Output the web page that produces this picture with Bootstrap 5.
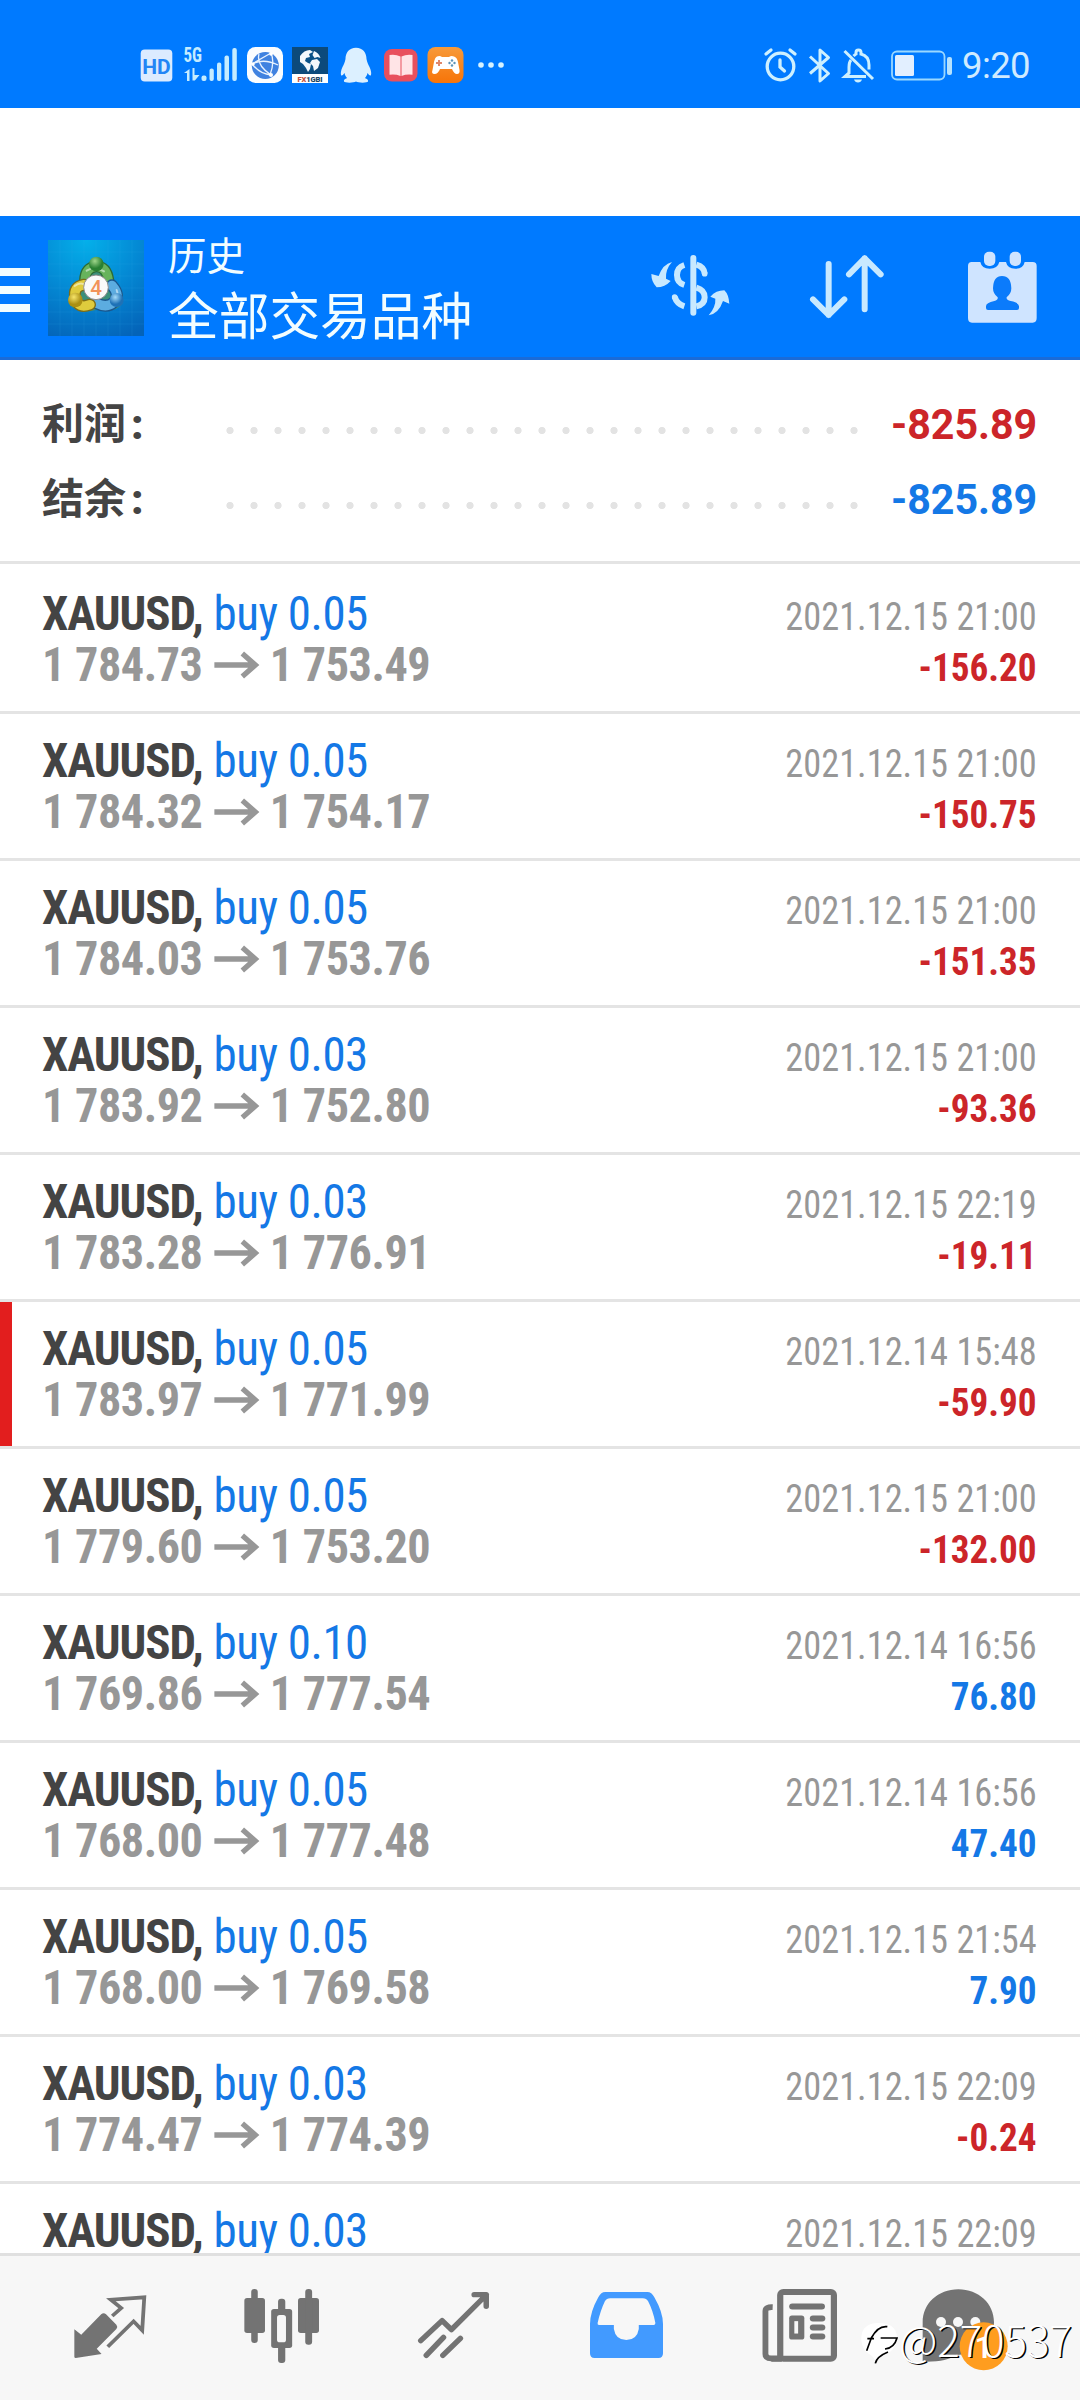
<!DOCTYPE html>
<html lang="zh-CN">
<head>
<meta charset="utf-8">
<meta name="viewport" content="width=device-width, initial-scale=1">
<title>历史</title>
<link rel="stylesheet" href="https://cdn.jsdelivr.net/npm/bootstrap@5.3.0/dist/css/bootstrap.min.css">
<style>
  body { width: 1080px; height: 2400px; overflow: hidden; background: #fff; font-family: Roboto, "Noto Sans CJK SC", sans-serif; color: #444; }
  svg { display: block; flex: none; overflow: visible; }
  .screen { height: 2400px; }
  .status-bar { height: 108px; background: #007aff; padding: 47px 50px 0 140px; }
  .clock { font-size: 36.5px; line-height: 37px; color: #cfeaff; letter-spacing: -.6px; margin-left: 9px; }
  .app-bar { margin-top: 108px; height: 144px; background: #007aff; border-bottom: 3px solid #1a6bd8; color: #f2fdff; }
  .burger { width: 30px; margin-top: 52px; }
  .burger i { display: block; height: 8px; background: #f2fdff; margin-bottom: 10px; }
  .title-sub { font-size: 38.5px; line-height: 50px; }
  .title-main { font-size: 50.7px; line-height: 70px; }
  .titles { margin-left: 24px; padding-top: 12px; font-family: "Noto Sans CJK SC", sans-serif; font-weight: 400; }
  .summary { height: 201px; padding: 26px 43px 0 42px; }
  .summary-line { height: 75px; font-size: 42px; line-height: 75px; font-weight: 700; }
  .summary-label { width: 176px; font-family: "Noto Sans CJK SC", sans-serif; line-height: 70px; }
  .summary-label b { font-family: Roboto, sans-serif; margin-left: 5px; }
  .summary-value { transform: scaleX(.98); transform-origin: right; padding-top: 1px; }
  .leader { width: 648px; height: 75px; background: radial-gradient(circle, #e3e3e3 3.2px, transparent 4px) 0 7px / 24px 75px; }
  .deals { height: 1692px; overflow: hidden; border-top: 3px solid #e4e4e4; padding-top: 3px; }
  .deal { height: 147px; border-bottom: 3px solid #e4e4e4; padding: 21px 43px 0 42px; line-height: 51px; font-family: "Roboto Condensed", Roboto, sans-serif; font-stretch: 75%; font-size: 48px; white-space: nowrap; }
  .deal.flagged { box-shadow: inset 12px 0 #e21e1e; }
  .order { transform: scaleX(.979); transform-origin: left; }
  .sym { font-weight: 700; letter-spacing: -1.1px; }
  .side { color: #1478e6; letter-spacing: -.5px; }
  .price { font-weight: 700; color: #979797; letter-spacing: -.5px; transform: scaleX(.963); transform-origin: left; }
  .deal-end { padding-top: 4px; font-size: 39px; }
  .when { color: #979797; transform: scaleX(.932); transform-origin: right; }
  .profit { font-weight: 700; transform: scaleX(.953); transform-origin: right; }
  .loss { color: #cc2529; }
  .gain { color: #1478e6; }
  .tabs { height: 147px; background: #f7f7f7; border-top: 3px solid #e0e0e0; position: relative; padding-top: 3px; }
  .watermark { right: 8px; top: 53px; color: #fff; }
  .watermark span { font: 300 42px/60px "Noto Sans CJK SC", sans-serif; text-shadow: 1.5px 1.2px 0 #000; }
</style>
</head>
<body>
<div class="screen d-flex flex-column">

  <header class="status-bar d-flex align-items-start">
    <svg width="33" height="36" viewBox="0 0 33 36"><rect x=".7" y="2.5" width="31.6" height="32" rx="4" fill="#dcebff"/><text x="16.4" y="26.500" text-anchor="middle" font-family="Roboto" font-weight="700" font-size="21" fill="#2385f5">HD</text></svg>
    <svg width="54" height="36" viewBox="0 0 54 36" style="margin-left:11px" fill="#c5ecff"><text x="-.5" y="14.500" font-family="Roboto Condensed" font-stretch="75%" font-weight="700" font-size="19.500" textLength="18.500" lengthAdjust="spacingAndGlyphs">5G</text><path d="M0 26l5.500-4v12H3v-8zM8.500 21l2 .0v7l5 0-4.600 5.500H8.500z"/><rect x="17.500" y="28.500" width="5" height="5.500" rx="2"/><rect x="25.500" y="21.500" width="4.300" height="12.500" rx="2"/><rect x="33" y="15.500" width="4.300" height="18.500" rx="2"/><rect x="40.500" y="8.500" width="4.500" height="25.500" rx="2"/><rect x="48.300" y="1" width="4.500" height="33" rx="2"/></svg>
    <svg width="36" height="36" viewBox="0 0 36 36" style="margin-left:9px"><rect width="36" height="36" rx="8.500" fill="#fafdff"/><circle cx="18.300" cy="18.500" r="13.500" fill="#3f82e0"/><path d="M5 17l19-11M5 17q8 10 19 11M24 6q4 9-1 22M12 7q-3 11 12 21M5 17q12-6 26 1" fill="none" stroke="#e8f3ff" stroke-width="1.300"/><g fill="#fff"><circle cx="6" cy="17" r="1.800"/><circle cx="24" cy="7" r="1.800"/><circle cx="24" cy="28" r="2"/></g></svg>
    <svg width="36" height="36" viewBox="0 0 36 36" style="margin-left:9px"><rect width="36" height="36" fill="#fff"/><rect width="36" height="27" fill="#0c4a7b"/><circle cx="18" cy="13.500" r="10.500" fill="#0a5288"/><path d="M8 9q4-6 10-6l3 2-4 2 1 3-4 1-1 3 3 2 3 1-1 5-2 3-2-4-3-4-3-2zM22 4q5 2 6.500 7l-3-1-3 1-2-3zM20 13l5-1 3 3-2 6-4 3-1-5-3-3z" fill="#f2f8fc"/><text x="18" y="34.500" text-anchor="middle" font-family="Roboto" font-weight="900" font-size="7.500" textLength="25" fill="#1b4563"><tspan fill="#c5533c">FX</tspan>1GBI</text></svg>
    <svg width="32" height="36" viewBox="0 0 32 36" style="margin-left:12px"><path d="M16 .8C9 .8 5.500 6 5.500 12c-.5 3-1.500 5-3 8-1.500 3-2 6-1.500 8 .8 1.500 2.500-.5 3.500-2 .5 2.500 1.500 4 2.700 5-2.500.7-3.700 2-3.200 3.500C4.500 36 14 36 16 34.500 18 36 27.500 36 28 34.500c.5-1.500-.7-2.800-3.200-3.500 1.200-1 2.200-2.500 2.700-5 1 1.500 2.700 3.500 3.500 2 .5-2 0-5-1.500-8-1.500-3-2.500-5-3-8C26.500 6 23 .8 16 .8z" fill="#dcf0ff"/></svg>
    <svg width="34" height="36" viewBox="0 0 34 36" style="margin-left:12px"><rect y="2" width="33.500" height="32.500" rx="8" fill="#e8505d"/><path d="M5.500 8q6-1 11 1.500V29q-5-2-11-1.200zM28.500 8q-6-1-11 1.500V29q5-2 11-1.200z" fill="#ffe4e6"/></svg>
    <svg width="37" height="36" viewBox="0 0 37 36" style="margin-left:9px"><defs><linearGradient id="og" x2="0" y2="1"><stop stop-color="#f79a3a"/><stop offset="1" stop-color="#f77408"/></linearGradient></defs><rect x=".5" width="36" height="36" rx="8" fill="url(#og)"/><path d="M10 9.500q3-1 5 .5h7q2-1.500 5-.5 3 .8 4 5.500l1.500 8q.5 4-2.500 4t-5-5H13q-2 5-5.500 5T5.500 23L7 15q1-4.700 3-5.500z" fill="#fff"/><path d="M9 16h6M12 13v6" stroke="#e0876a" stroke-width="2"/><g fill="#5c93b8"><circle cx="25" cy="13.500" r="1.200"/><circle cx="25" cy="18.500" r="1.200"/><circle cx="22.500" cy="16" r="1.200"/><circle cx="27.500" cy="16" r="1.200"/></g></svg>
    <svg width="26" height="36" viewBox="0 0 26 36" style="margin-left:14px" fill="#d6f2ff"><circle cx="3" cy="18" r="2.800"/><circle cx="13" cy="18" r="2.800"/><circle cx="23" cy="18" r="2.800"/></svg>

    <div class="d-flex ms-auto">
      <svg width="33" height="36" viewBox="0 0 33 36" fill="none" stroke="#cdf0ff" stroke-width="3.300" stroke-linecap="round"><circle cx="16.500" cy="19.500" r="13.300"/><path d="M16 13v7l4.500 4M2 7l5-4M31 7l-5-4"/></svg>
      <svg width="22" height="36" viewBox="0 0 22 36" style="margin-left:12px" fill="none" stroke="#cdf0ff" stroke-width="3" stroke-linejoin="round"><path d="M1 9.500l18.500 17L11 34V3l8.500 7.500L1 26.500"/></svg>
      <svg width="31" height="36" viewBox="0 0 31 36" style="margin-left:12px" fill="none" stroke="#cdf0ff" stroke-width="3"><path d="M1.500 4L30 32M8 13q-2 2-2 7v6l-4 3.500h21M10.500 9q1.500-1.500 2.500-2V5.500a2.500 2.500 0 0 1 5 0V7q8 2 8 11v4.500"/><path d="M11 32.500h8q-1 3-4 3t-4-3z" fill="#cdf0ff" stroke="none"/></svg>
      <svg width="62" height="36" viewBox="0 0 62 36" style="margin-left:17px"><rect x="1" y="4.500" width="52.500" height="28" rx="5" fill="none" stroke="#9ad8ff" stroke-width="1.800"/><rect x="4" y="8" width="19" height="21" rx="1.500" fill="#e2efff"/><rect x="56" y="10" width="5" height="18" rx="2" fill="#b5e2ff"/></svg>
      <div class="clock">9:20</div>
    </div>
  </header>

  <nav class="app-bar d-flex align-items-start">
    <div class="burger"><i></i><i></i><i></i></div>
    <svg width="96" height="96" viewBox="144 90 288 288" style="margin:24px 0 0 18px">
      <defs>
        <radialGradient id="bg" cx=".4" cy="0" r="1.100"><stop stop-color="#04b0ea"/><stop offset=".5" stop-color="#0489d4"/><stop offset="1" stop-color="#0463b8"/></radialGradient>
        <radialGradient id="gn" cx=".4" cy=".3"><stop stop-color="#9fd68a"/><stop offset="1" stop-color="#2a8032"/></radialGradient>
        <radialGradient id="yl" cx=".4" cy=".3"><stop stop-color="#f7e56a"/><stop offset="1" stop-color="#ab8f14"/></radialGradient>
        <radialGradient id="bl" cx=".4" cy=".3"><stop stop-color="#a6dcfa"/><stop offset="1" stop-color="#1e71b6"/></radialGradient>
      </defs>
      <rect x="144" y="90" width="288" height="288" fill="url(#bg)"/>
      <path d="M180 90v288M216 90v288M252 90v288M288 90v288M324 90v288M360 90v288M396 90v288M144 126h288M144 162h288M144 198h288M144 234h288M144 270h288M144 306h288M144 342h288" stroke="#46b4ea" stroke-opacity=".2" stroke-width="2"/>
      <path d="M238 214Q240 160 288 154Q338 160 342 214Q376 240 366 282Q344 310 296 298Q240 316 210 286Q198 226 238 214z" fill="#3c8f7a"/>
      <g fill="none" stroke-linecap="round">
        <path d="M254 212Q256 172 288 170T326 212" stroke="#2c6b35" stroke-width="34"/><path d="M254 212Q256 172 288 170T326 212" stroke="#67b35c" stroke-width="26"/>
        <path d="M336 226Q362 256 342 276T290 280" stroke="#1b568c" stroke-width="36"/><path d="M336 226Q362 256 342 276T290 280" stroke="#5cace0" stroke-width="28"/>
        <path d="M252 224Q218 230 226 264T270 284" stroke="#7d6c17" stroke-width="36"/><path d="M252 224Q218 230 226 264T270 284" stroke="#dfcb3d" stroke-width="28"/>
        <path d="M260 182q24-16 52 2M224 228q14-10 26-6M350 240q8 20-8 36" stroke="#fff" stroke-opacity=".5" stroke-width="6"/>
      </g>
      <circle cx="289" cy="162" r="22" fill="url(#gn)"/><circle cx="226" cy="270" r="22" fill="url(#yl)"/><circle cx="350" cy="270" r="21" fill="url(#bl)"/>
      <circle cx="288" cy="232" r="37" fill="#fafafa" stroke="#8c8c8c" stroke-width="3"/>
      <text x="288" y="254" text-anchor="middle" font-family="Roboto" font-weight="500" font-size="62" fill="#f2935a">4</text>
    </svg>
    <div class="titles"><div class="title-sub">历史</div><div class="title-main">全部交易品种</div></div>
    <div class="d-flex ms-auto" style="margin-right:43px">
      <svg width="79" height="62" viewBox="92 137 237 186" style="margin:39px 80px 0 0" fill="none" stroke="#c8e9ff" stroke-width="18">
        <path d="M219 146v164" stroke-linecap="round"/>
        <path d="M192 167Q170 174 170 197T192 227M163 263Q170 284 192 291"/><circle cx="163" cy="263" r="8.500" fill="#c8e9ff" stroke="none"/>
        <path d="M228 166Q252 173 253 193M228 235Q253 242 253 264T228 291"/><circle cx="253" cy="193" r="8.500" fill="#c8e9ff" stroke="none"/>
        <path d="M155 158Q128 164 115 200L93 194Q93 218 109 234Q134 234 151 215L137 208Q135 180 155 158zM265 318Q295 313 308 275L327 283Q325 255 312 243Q287 243 270 262L285 268Q287 292 265 318z" fill="#c8e9ff" stroke="none"/>
      </svg>
      <svg width="74" height="64" viewBox="568 137 222 192" style="margin:39px 84px 0 0" fill="none" stroke="#c8e9ff" stroke-width="18" stroke-linecap="round" stroke-linejoin="round"><path d="M624 164v153M577 270l47 47 47-47M732 300V147M685 195l47-48 48 48"/></svg>
      <svg width="69" height="72" viewBox="1043 123 207 216" style="margin-top:35px"><path d="M1054 156h26q4 20 28 20t29-20h20q4 20 28 20t28-20h24q12 0 12 12v156q0 14-12 14h-182q-12 0-12-14V168q0-12 11-12z" fill="#cfe4ff"/><rect x="1091" y="125" width="34" height="43" rx="15" fill="#cfe4ff"/><rect x="1168" y="125" width="34" height="43" rx="15" fill="#cfe4ff"/><path d="M1145 198q27 0 28 37 0 16-14 27-2 8 12 11 25 5 25 16v5q0 6-6 6h-87q-6 0-6-6v-5q0-11 25-16 12-3 10-11-14-11-14-27 1-37 27-37z" fill="#0b7bfb"/></svg>
    </div>
  </nav>

  <section class="summary">
    <div class="summary-line d-flex justify-content-between"><div class="d-flex"><span class="summary-label">利润<b>:</b></span><div class="leader"></div></div><span class="summary-value loss">-825.89</span></div>
    <div class="summary-line d-flex justify-content-between"><div class="d-flex"><span class="summary-label">结余<b>:</b></span><div class="leader"></div></div><span class="summary-value gain">-825.89</span></div>
  </section>

  <ul class="deals list-unstyled mb-0" id="deals"></ul>

  <footer class="tabs d-flex align-items-start">
    <svg preserveAspectRatio="none" width="72" height="63" viewBox="215 284 209 189" style="margin:36px 0 0 74px"><path d="M216 387l20 16 58-61q7-6 14 0l30 31q5 6 0 13l-57 59 14 16-75 12q-4 0-4-4z" fill="#737373"/><path d="M326 347l26-24-30-25 97-7-6 99-25-27-75 76" fill="none" stroke="#737373" stroke-width="11"/></svg>
    <svg preserveAspectRatio="none" width="75" height="74" viewBox="708 267 218 222" style="margin:30px 0 0 98px" fill="#737373"><rect x="709" y="294" width="60" height="105" rx="8"/><rect x="729" y="267" width="19" height="162" rx="9"/><rect x="865" y="294" width="61" height="105" rx="8"/><rect x="886" y="267" width="20" height="167" rx="9"/><rect x="807" y="296" width="21" height="50" rx="9"/><rect x="807" y="430" width="21" height="59" rx="9"/><rect x="787" y="327" width="61" height="117" rx="8"/><rect x="804" y="345" width="26" height="82" rx="8" fill="#f7f7f7"/></svg>
    <svg preserveAspectRatio="none" width="71" height="66" viewBox="1214 276 206 198" style="margin:33px 0 0 99px" fill="none" stroke="#737373" stroke-width="16" stroke-linecap="round"><path d="M1222 422l62-60 27 27 101-104M1377 284h35v35M1238 466l50-54M1286 466l51-51" stroke-linejoin="round"/></svg>
    <svg preserveAspectRatio="none" width="73" height="66" viewBox="146 276 211 198" style="margin:33px 0 0 101px"><path d="M190 276h122q12 0 20 16 25 45 25 80v88q0 14-13 14H159q-13 0-13-14v-88q0-35 24-80 8-16 20-16z" fill="#429aff"/><path d="M204 295h95q10 0 15 9 14 28 21 65 0 6-5 6h-43v12q-5 33-36 33t-36-33v-12h-43q-5 0-4-6 8-37 21-65 5-9 15-9z" fill="#f7f7f7"/></svg>
    <svg preserveAspectRatio="none" width="75" height="73" viewBox="646 266 218 218" style="margin:30px 0 0 99px"><path d="M677 320q-21-1-21 12v128q0 13 16 13h30" fill="none" stroke="#737373" stroke-width="17"/><rect x="699" y="275" width="156" height="199" rx="9" fill="none" stroke="#737373" stroke-width="18"/><g fill="#737373"><path d="M680 474V466h20l4 17h-32z"/><rect x="725" y="309" width="104" height="18" rx="9"/><rect x="725" y="345" width="44" height="72" rx="8"/><rect x="785" y="345" width="45" height="18" rx="9"/><rect x="785" y="372" width="45" height="18" rx="9"/><rect x="785" y="399" width="45" height="18" rx="9"/></g><rect x="740" y="362" width="11" height="37" fill="#f7f7f7"/></svg>
    <svg width="86" height="82" viewBox="245 56 258 246" style="margin:30px 0 0 85px"><path d="M354 57C415 57 461 100 461 156S415 254 345 254Q320 276 247 274V156C247 100 293 57 354 57z" fill="#737373"/><g fill="#f7f7f7"><circle cx="302" cy="155" r="15"/><circle cx="353" cy="155" r="15"/><circle cx="405" cy="155" r="15"/></g><circle cx="430" cy="228" r="72" fill="#ff9d1f"/><text x="430" y="264" text-anchor="middle" font-family="Roboto" font-weight="500" font-size="96" fill="#fff">1</text></svg>
    <div class="watermark position-absolute d-flex align-items-center">
      <svg width="38" height="40" viewBox="48 160 112 120" style="margin-top:8px"><path d="M48 200q4-36 45-40 62-2 62 45-3 40-45 55-14 6-17 20-8-18-14-22-34-18-31-58z" fill="#fff"/><path d="M64 243l14-38q20-38 48-34M66 207h20M106 205h49q-8 30-36 33M90 281q4-20 38-34" fill="none" stroke="#000" stroke-width="5"/></svg>
      <span>@270537</span>
    </div>
  </footer>
</div>

<script src="https://cdn.jsdelivr.net/npm/bootstrap@5.3.0/dist/js/bootstrap.bundle.min.js"></script>
<script>
  const deals = [
    ['0.05', '1 784.73', '1 753.49', '2021.12.15 21:00', '-156.20'],
    ['0.05', '1 784.32', '1 754.17', '2021.12.15 21:00', '-150.75'],
    ['0.05', '1 784.03', '1 753.76', '2021.12.15 21:00', '-151.35'],
    ['0.03', '1 783.92', '1 752.80', '2021.12.15 21:00', '-93.36'],
    ['0.03', '1 783.28', '1 776.91', '2021.12.15 22:19', '-19.11'],
    ['0.05', '1 783.97', '1 771.99', '2021.12.14 15:48', '-59.90', 'flagged'],
    ['0.05', '1 779.60', '1 753.20', '2021.12.15 21:00', '-132.00'],
    ['0.10', '1 769.86', '1 777.54', '2021.12.14 16:56', '76.80'],
    ['0.05', '1 768.00', '1 777.48', '2021.12.14 16:56', '47.40'],
    ['0.05', '1 768.00', '1 769.58', '2021.12.15 21:54', '7.90'],
    ['0.03', '1 774.47', '1 774.39', '2021.12.15 22:09', '-0.24'],
    ['0.03', '', '', '2021.12.15 22:09', '']
  ];
  const arrow = '<svg width="47" height="26" viewBox="0 0 47 26" style="margin:0 11px 0 12px" fill="none" stroke="#979797" stroke-width="5.5"><path d="M0 13h43M29 1.500L42.500 13 29 24.500"/></svg>';
  document.getElementById('deals').innerHTML = deals.map(([lot, open, close, when, profit, flag]) => `
    <li class="deal d-flex justify-content-between ${flag || ''}">
      <div><div class="order"><span class="sym">XAUUSD,</span> <span class="side">buy ${lot}</span></div>
      <div class="price d-flex align-items-center">${open ? `<span>${open}</span>${arrow}<span>${close}</span>` : ''}</div></div>
      <div class="deal-end text-end"><div class="when">${when}</div><div class="profit ${profit[0] === '-' ? 'loss' : 'gain'}">${profit}</div></div>
    </li>`).join('');
</script>
</body>
</html>
